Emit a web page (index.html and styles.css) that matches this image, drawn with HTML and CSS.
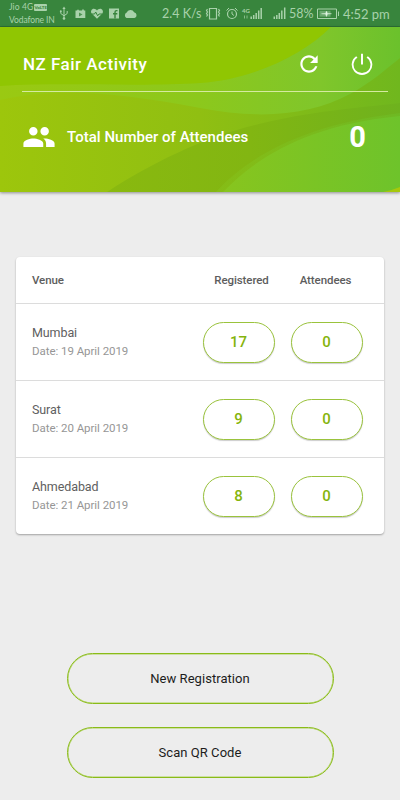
FILE: index.html
```html
<!DOCTYPE html>
<html lang="en">
<head>
<meta charset="utf-8">
<title>NZ Fair Activity</title>
<link rel="stylesheet" href="styles.css">
</head>
<body>
<div class="status">
  <div class="carriers">
    <div class="carrier"><span class="jio">Jio 4G</span><span class="volte">VoLTE</span></div>
    <div class="carrier"><span class="vodafone">Vodafone IN</span></div>
  </div>
  <svg class="notices" width="80" height="27" viewBox="58 0 80 27" fill="#a9d2ab">
    <g fill="none" stroke="#a9d2ab"><path d="M64 8.500V18M60.800 11.500V13.500L64 15.800L67.200 13.500V11"/></g>
    <path d="M64 6.500l1.600 2.500h-3.200z"/><circle cx="64" cy="18.500" r="1.300"/><circle cx="60.800" cy="11.300" r="1"/>
    <path d="M75.500 10.500h1.500l1-1.300 1 1.300h3l1-1.700 1 1.700h1.300v7.500h-9.800z"/><path d="M79 12.500l3.500 2-3.500 2z" fill="#4e9352"/>
    <path d="M97 18.700l-5.300-5.100c-1.600-2-.2-4.800 2.200-4.800 1.300 0 2.400.7 3.100 1.800.7-1.100 1.800-1.800 3.100-1.800 2.400 0 3.800 2.800 2.200 4.800z"/>
    <path d="M91.500 14h3l1.200-2 2 3.800 1.300-1.800h3" fill="none" stroke="#38853d"/>
    <path d="M109 8.500h10v10h-10z"/><path d="M117.500 10.600h-1c-1.200 0-1.500.6-1.500 1.700v6.200M113 13.700h4.300" fill="none" stroke="#38853d" stroke-width="1.400"/>
    <path d="M126.500 18a3 3 0 0 1 .2-5.400 4 4 0 0 1 7.400-.4 3 3 0 0 1 .4 5.800z"/>
  </svg>
  <span class="speed">2.4 K/s</span>
  <svg class="signals" width="84" height="27" viewBox="204 0 84 27" fill="none" stroke="#a9d2ab">
    <path d="M209.500 8.500h7v10.500h-7zM207.500 9l-1 1.500 1 1.500-1 1.500 1 1.500-1 1.500M218.500 9l1 1.500-1 1.500 1 1.500-1 1.500 1 1.500" stroke-width="1.200"/>
    <circle cx="232" cy="14" r="4.500" stroke-width="1.200"/><path d="M232 11.500V14l2 1.500M226.500 10.500l2.500-2.500M237.500 10.500L235 8"/>
    <path d="M251.200 16.500V19M253.700 15V19M256.200 13V19M258.700 10.500V19M261.200 8V19M274.300 16.500V19M276.800 15V19M279.300 13V19M281.800 10.500V19M284.700 7.500V19" stroke-width="1.500"/>
    <path d="M244.500 15.500v3M247 15.500v3" stroke-width=".7"/>
    <text class="mini" x="242" y="12.500">4G</text>
  </svg>
  <span class="percent">58%</span>
  <svg class="battery" width="24" height="27" viewBox="316 0 24 27" fill="none" stroke="#a9d2ab">
    <path d="M317.500 9h19v9.500h-19zM338.500 11.500v4.500"/><path d="M319.500 10.800h11v5.900h-11z" fill="#a9d2ab" stroke="none" opacity=".45"/><path d="M321.500 13.700l4-.2 1-2.500 1 2.500 4 .2-4 .4-1 2.500-1-2.500z" fill="#e2f4e3" stroke="#e2f4e3" stroke-width=".4"/>
  </svg>
  <span class="clock">4:52 pm</span>
</div>
<header class="hero">
  <svg class="waves" width="400" height="165" viewBox="0 0 400 165">
    <defs>
      <linearGradient id="light" x1="0" x2="400" gradientUnits="userSpaceOnUse"><stop offset="0" stop-color="#9ac912"/><stop offset=".5" stop-color="#8cc81c"/><stop offset=".8" stop-color="#80c62b"/><stop offset="1" stop-color="#6bc12c"/></linearGradient>
      <linearGradient id="middle" x1="0" x2="400" gradientUnits="userSpaceOnUse"><stop offset="0" stop-color="#9dc60c"/><stop offset=".5" stop-color="#90bf12"/><stop offset="1" stop-color="#70b71e"/></linearGradient>
      <linearGradient id="dark" x1="100" x2="400" gradientUnits="userSpaceOnUse"><stop offset="0" stop-color="#8ab90f"/><stop offset=".5" stop-color="#82b612"/><stop offset="1" stop-color="#6eb21e"/></linearGradient>
      <linearGradient id="bottom" x1="220" x2="400" gradientUnits="userSpaceOnUse"><stop offset="0" stop-color="#88c51e"/><stop offset="1" stop-color="#6ec32b"/></linearGradient>
    </defs>
    <path fill="url(#light)" d="M0 0H400V165H0z"/>
    <path fill="#90c602" d="M0 0H331C302 29 250 53 200 56C142 60 60 55 0 59z"/>
    <path fill="url(#middle)" d="M0 73C60 60 118 66 200 81C262 93 310 88 350 67C372 55 386 42 400 31V165H0z"/>
    <path fill="url(#dark)" d="M107 165C150 137 202 111 255 98C310 84 358 81 400 76V165z"/>
    <path fill="url(#bottom)" opacity=".4" d="M216 165C248 130 302 98 400 86V165z"/>
    <path fill="url(#bottom)" d="M223 165C257 130 307 98 400 89V165z"/>
    <path fill="#a6c80c" d="M383 165Q393 163 400 160V165z"/>
  </svg>
  <div class="bar">
    <h1>NZ Fair Activity</h1>
    <svg class="refresh" width="26" height="26" viewBox="0 0 24 24" fill="#fff"><path d="M17.650 6.350C16.200 4.900 14.210 4 12 4c-4.420 0-7.990 3.580-7.990 8s3.570 8 7.990 8c3.730 0 6.840-2.550 7.730-6h-2.080c-.82 2.330-3.040 4-5.650 4-3.310 0-6-2.690-6-6s2.690-6 6-6c1.660 0 3.140.69 4.220 1.780L13 11h7V4z"/></svg>
    <svg class="power" width="26" height="26" viewBox="0 0 24 24" fill="#fff"><path d="M12.900 2.500h-1.800V12.500h1.800zM17.400 4.800l-1.200 1.200A7.800 7.800 0 1 1 7.800 6L6.600 4.800A9.500 9.500 0 1 0 17.400 4.800z"/></svg>
  </div>
  <div class="total">
    <svg class="people" width="34" height="34" viewBox="0 0 24 24" fill="#fff"><path d="M16 11c1.660 0 2.990-1.340 2.990-3S17.660 5 16 5s-3 1.340-3 3 1.340 3 3 3zm-8 0c1.660 0 2.990-1.340 2.990-3S9.660 5 8 5 5 6.340 5 8s1.340 3 3 3zm0 2c-2.330 0-7 1.170-7 3.500V19h14v-2.500c0-2.330-4.670-3.500-7-3.500zm8 0c-.29 0-.62.020-.97.050 1.160.84 1.970 1.970 1.970 3.450V19h6v-2.500c0-2.330-4.670-3.500-7-3.500z"/></svg>
    <span class="label">Total Number of Attendees</span>
    <strong>0</strong>
  </div>
</header>
<main>
  <section class="card">
    <div class="head"><span>Venue</span><span class="c">Registered</span><span class="c">Attendees</span></div>
    <div class="row"><div><div class="city">Mumbai</div><div class="date">Date: 19 April 2019</div></div><span class="pill">17</span><span class="pill">0</span></div>
    <div class="row"><div><div class="city">Surat</div><div class="date">Date: 20 April 2019</div></div><span class="pill">9</span><span class="pill">0</span></div>
    <div class="row"><div><div class="city">Ahmedabad</div><div class="date">Date: 21 April 2019</div></div><span class="pill">8</span><span class="pill">0</span></div>
  </section>
  <div class="actions">
    <button>New Registration</button>
    <button>Scan QR Code</button>
  </div>
</main>
</body>
</html>
```
FILE: styles.css
```css
* { box-sizing: border-box; }
body { margin: 0; width: 400px; height: 800px; overflow: hidden; background: #ededed; font-family: Roboto, sans-serif; }
svg { display: block; flex: none; }
.status { height: 27px; background: #38853d; border-bottom: 1px solid #2d7136; display: flex; color: #a9d2ab; font-family: Lato, sans-serif; white-space: nowrap; overflow: hidden; }
.carriers { width: 58px; padding: 1px 0 0 9px; font-size: 8.5px; flex: none; }
.carrier { height: 13px; line-height: 13px; display: flex; align-items: center; }
.jio { letter-spacing: 0.1px; }
.vodafone { letter-spacing: -0.1px; }
.volte { background: #a9d2ab; color: #38853d; font-size: 4.5px; line-height: 7px; font-weight: 900; border-radius: 1px; margin-left: 1px; width: 13px; text-align: center; }
.speed { width: 66px; padding-left: 24px; line-height: 28px; font-size: 12.5px; flex: none; }
.mini { font: 700 6px Lato, sans-serif; fill: #a9d2ab; stroke: none; }
.percent { width: 28px; padding-left: 1px; line-height: 28px; font-size: 12.5px; flex: none; }
.clock { padding-left: 3px; line-height: 28px; font-size: 13px; letter-spacing: -0.1px; }
.hero { height: 165px; position: relative; color: #fff; box-shadow: 0 1px 3px rgba(0,0,0,.4); display: flex; flex-direction: column; }
.waves { position: absolute; inset: 0; }
.bar { position: relative; margin: 0 12px 0 22px; height: 65px; border-bottom: 1px solid #d5eaa0; display: flex; align-items: center; padding: 10px 13px 0 1px; }
h1 { margin: 0; flex: 1; font-size: 17px; font-weight: 500; letter-spacing: 0.5px; }
.power { margin-left: 27px; }
.total { position: relative; height: 90px; padding: 0 34px 0 22px; display: flex; align-items: center; }
.label { margin-left: 11px; flex: 1; font-size: 15px; font-weight: 500; letter-spacing: 0.02px; }
.total strong { font-size: 29px; font-weight: 700; }
main { padding: 65px 16px 0; }
.card { background: #fff; border-radius: 4px; height: 277px; box-shadow: 0 1px 2px rgba(0,0,0,.32); }
.head, .row { display: grid; grid-template-columns: 154.5px 72px 72px; column-gap: 16px; align-items: center; padding-left: 16px; }
.head { height: 46px; padding-bottom: 1px; font-size: 11.5px; font-weight: 500; color: #5d5d5d; letter-spacing: -0.08px; }
.c { text-align: center; margin-left: 6px; }
.c:last-child { margin-left: -2px; }
.row { height: 77px; border-top: 1px solid #dcdcdc; }
.city { font-size: 12.5px; line-height: 18px; color: #606060; letter-spacing: -0.1px; }
.date { font-size: 11.5px; line-height: 18px; color: #969696; letter-spacing: -0.05px; }
.pill { height: 41px; border: 1px solid #9ac33c; border-radius: 21px; text-align: center; line-height: 39px; font-size: 15px; font-weight: 500; color: #85b40c; box-shadow: 0 1px 1px rgba(0,0,0,.2); background: #fff; }
.actions { margin: 119px 50.5px 0; display: grid; gap: 22.5px; }
button { height: 51px; border: 1px solid #8abb18; outline: 0.5px solid #bbdb72; outline-offset: 0; border-radius: 26px; background: transparent; font: 13px Roboto, sans-serif; letter-spacing: 0.05px; color: #1c1c1c; padding: 0; box-shadow: inset 0 0 0 0.5px #aed45b; outline: none; }
```
